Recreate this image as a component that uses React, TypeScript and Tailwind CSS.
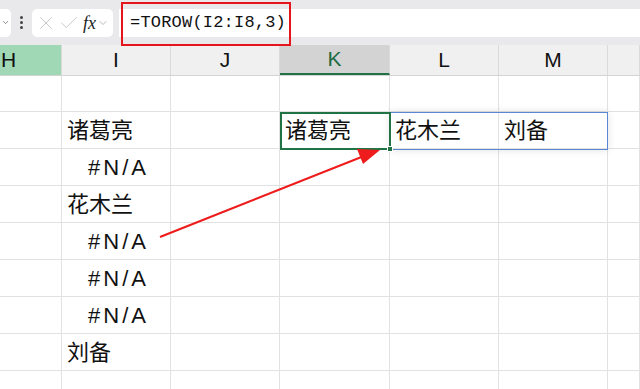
import { ChevronDown, X, Check } from 'lucide-react';

const COLS = [
  { key: 'H', w: 62 },
  { key: 'I', w: 109 },
  { key: 'J', w: 109 },
  { key: 'K', w: 110 },
  { key: 'L', w: 109 },
  { key: 'M', w: 109 },
  { key: 'N', w: 32 },
];

const ROW_H = [36, 37, 37, 37, 37, 37, 37, 37, 19];

// column I values, rows 1..9
const colI: Record<number, string> = {
  1: '诸葛亮',
  2: '#N/A',
  3: '花木兰',
  4: '#N/A',
  5: '#N/A',
  6: '#N/A',
  7: '刘备',
};

const spill: Record<string, string> = { K: '诸葛亮', L: '花木兰', M: '刘备' };

function Cell({ col, row, h }: { col: { key: string; w: number }; row: number; h: number }) {
  let text = '';
  if (col.key === 'I') text = colI[row] ?? '';
  if (row === 1 && spill[col.key]) text = spill[col.key];
  const isErr = text === '#N/A';
  return (
    <div
      className={`flex items-center shrink-0 border-r border-b border-[#e1e1e1] pl-[5px] pt-[1px] text-[22px] text-[#111] ${isErr ? 'justify-center tracking-[3px]' : ''}`}
      style={{ width: col.w, height: h }}
    >
      {text}
    </div>
  );
}

export default function App() {
  return (
    <div
      className="relative w-[640px] h-[389px] overflow-hidden bg-white"
      style={{ fontFamily: '"Liberation Sans", "Noto Sans CJK SC", sans-serif' }}
    >
      {/* Formula bar */}
      <div className="flex items-center h-[45px] bg-[#e9e9ec]">
        <div className="flex items-center justify-end w-[11px] h-[28px] bg-white rounded-r-[5px] pr-[1px]">
          <ChevronDown className="w-[9px] h-[9px] text-[#666]" strokeWidth={2} />
        </div>
        <div className="flex flex-col items-center gap-[2px] w-[21px]">
          <span className="w-[3px] h-[3px] rounded-full bg-[#444]"></span>
          <span className="w-[3px] h-[3px] rounded-full bg-[#444]"></span>
          <span className="w-[3px] h-[3px] rounded-full bg-[#444]"></span>
        </div>
        <div className="flex items-center w-[81px] h-[28px] bg-white rounded-[5px] pl-[3px] gap-[1px]">
          <X className="w-[22px] h-[22px] text-[#c4c4c4]" strokeWidth={1} />
          <Check className="w-[22px] h-[22px] text-[#c4c4c4]" strokeWidth={1} />
          <span
            className="text-[18px] italic text-[#222] ml-[2px] leading-none"
            style={{ fontFamily: '"Liberation Serif", serif' }}
          >
            fx
          </span>
          <ChevronDown className="w-[12px] h-[12px] text-[#999]" strokeWidth={1.4} />
        </div>
        <div className="flex items-center flex-1 h-[28px] bg-white ml-[6px] pl-[11px]">
          <span
            className="text-[17px] text-[#111] tracking-[0.2px]"
            style={{ fontFamily: '"Liberation Mono", monospace' }}
          >
            =TOROW(I2:I8,3)
          </span>
        </div>
      </div>

      {/* Column headers */}
      <div className="flex h-[31px] bg-[#f0f0f0] border-b border-[#d4d4d4]">
        {COLS.map((c) => (
          <div
            key={c.key}
            className={`flex items-center justify-center shrink-0 border-r border-[#dadada] text-[21px] ${
              c.key === 'H'
                ? 'bg-[#a0d8b6] text-[#111] pr-[44px]'
                : c.key === 'K'
                ? 'bg-[#d3d3d3] text-[#1f6b43] border-b-2 border-b-[#217346]'
                : 'text-[#111]'
            }`}
            style={{ width: c.w }}
          >
            {c.key === 'N' ? '' : c.key}
          </div>
        ))}
      </div>

      {/* Grid */}
      {ROW_H.map((h, r) => (
        <div key={r} className="flex">
          {COLS.map((c) => (
            <Cell key={c.key} col={c} row={r} h={h} />
          ))}
        </div>
      ))}

      {/* Spill range outline */}
      <div className="absolute left-[390px] top-[112px] w-[218px] h-[38px] border border-[#5b86d4] shadow-[0_0_8px_rgba(0,0,0,0.12)]"></div>
      {/* Active cell */}
      <div className="absolute left-[280px] top-[112px] w-[111px] h-[38px] border-2 border-[#217346]"></div>
      <div className="absolute left-[387px] top-[146px] w-[6px] h-[6px] bg-[#217346] border border-white"></div>

      {/* Red formula highlight */}
      <div className="absolute left-[121px] top-[2px] w-[170px] h-[44px] border-2 border-[#e8141b]"></div>

      {/* Arrow */}
      <svg className="absolute left-0 top-0" width="640" height="389">
        <line x1="160" y1="237" x2="364" y2="156" stroke="#ee1c1c" strokeWidth="2.2" />
        <polygon points="380,150 357,149 363,164" fill="#ee1c1c" />
      </svg>
    </div>
  );
}
